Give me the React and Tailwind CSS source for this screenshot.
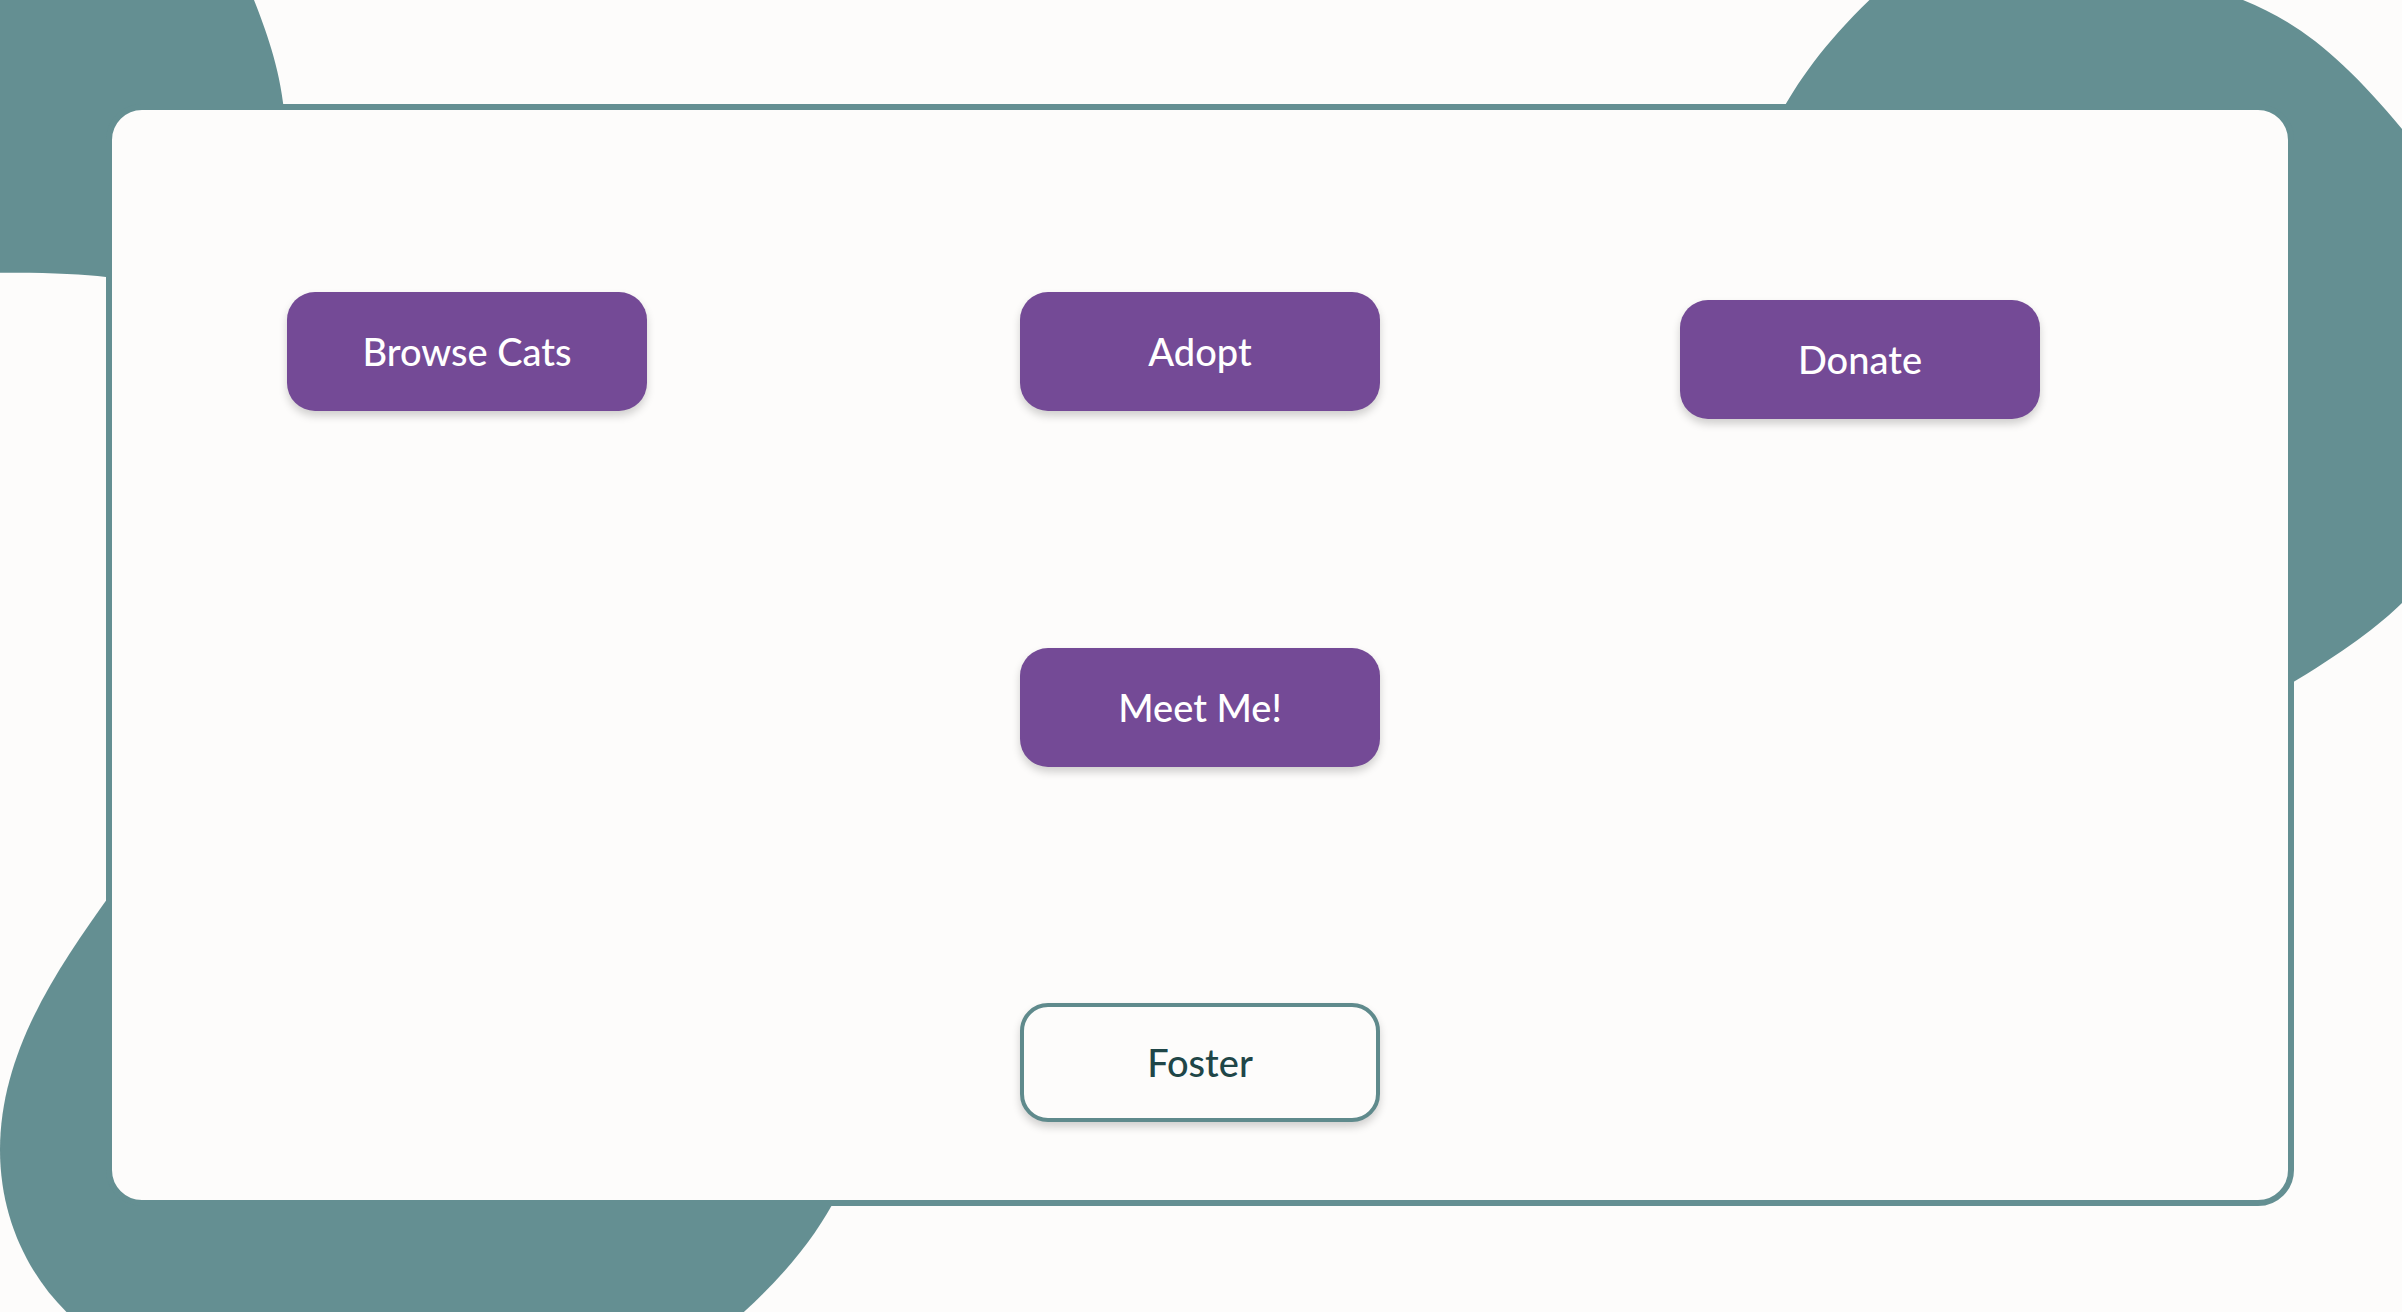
import React from "react";

function Blobs() {
  return (
    <svg
      className="absolute inset-0 w-full h-full"
      viewBox="0 0 2402 1312"
      preserveAspectRatio="none"
      aria-hidden="true"
    >
      <g fill="#648f92">
        <path d="M -10 -10 L 250 -10 C 262 20, 279 62, 284 110 L 284 290 L 106 290 L 106 277 C 80 274, 40 272, -10 273 Z" />
        <path d="M 1760 160 C 1778 110, 1810 55, 1880 -10 L 2230 -10 L 2243 0 C 2303 24, 2347 63, 2402 129 L 2430 160 L 2430 580 L 2402 603 C 2380 625, 2340 655, 2280 690 L 1760 690 Z" />
        <path d="M 110 895 C 60 965, 0 1050, 0 1150 C 0 1220, 30 1280, 75 1320 L 735 1320 C 780 1280, 815 1240, 840 1190 L 840 895 Z" />
      </g>
    </svg>
  );
}

function PurpleButton({ children, className = "" }) {
  return (
    <button
      className={`w-[360px] h-[119px] shrink-0 rounded-[28px] bg-[#744a96] text-[#ffffff] text-[38px] font-medium shadow-[0_5px_8px_rgba(0,0,0,0.18)] flex items-center justify-center ${className}`}
    >
      {children}
    </button>
  );
}

export default function App() {
  return (
    <div
      className="relative w-[2402px] h-[1312px] overflow-hidden bg-[#fdfcfb]"
      style={{ fontFamily: "Lato, 'Open Sans', sans-serif" }}
    >
      <Blobs />
      <div className="relative pl-[106px] pt-[104px]">
        <div className="w-[2188px] h-[1102px] rounded-[36px] border-[6px] border-[#648f92] bg-[#fdfcfb] flex flex-col">
          <div className="flex items-start pl-[175px] pt-[182px]">
            <PurpleButton>Browse Cats</PurpleButton>
            <PurpleButton className="ml-[373px]">Adopt</PurpleButton>
            <PurpleButton className="ml-[300px] mt-[8px]">Donate</PurpleButton>
          </div>
          <div className="flex justify-center mt-[229px]">
            <PurpleButton>Meet Me!</PurpleButton>
          </div>
          <div className="flex justify-center mt-[236px]">
            <button className="w-[360px] h-[119px] rounded-[28px] border-[4px] border-[#5f8a8c] bg-[#fdfcfb] text-[#1f4648] text-[38px] font-medium shadow-[0_5px_8px_rgba(0,0,0,0.18)] flex items-center justify-center">
              Foster
            </button>
          </div>
        </div>
      </div>
    </div>
  );
}
